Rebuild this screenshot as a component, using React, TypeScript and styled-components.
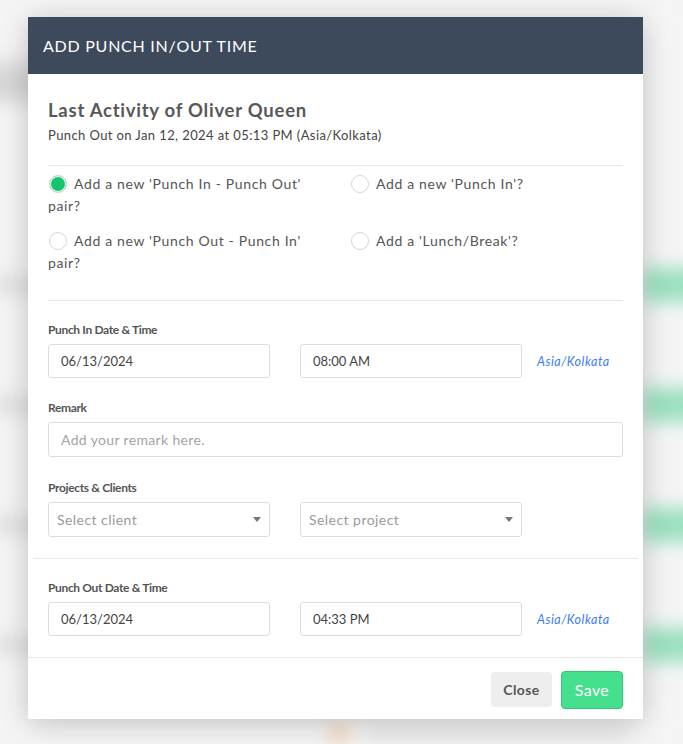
import React from "react";
import styled, { createGlobalStyle } from "styled-components";

const GlobalStyle = createGlobalStyle`
  html, body {
    margin: 0;
    padding: 0;
    background: #f4f4f4;
    font-family: "Lato", "Liberation Sans", sans-serif;
  }
  * { box-sizing: border-box; }
`;

const Screen = styled.div`
  position: relative;
  width: 683px;
  height: 744px;
  overflow: hidden;
`;

// blurred page behind the modal
const Backdrop = styled.div`
  display: flex;
  flex-direction: column;
  width: 683px;
  height: 744px;
  padding-top: 62px;
  background: #f5f5f5;
  filter: blur(9px);
`;

const BgTopBar = styled.div`
  height: 40px;
  margin-left: -20px;
  width: 70px;
  background: #d8d8d8;
`;

const BgRows = styled.div`
  display: flex;
  flex-direction: column;
  margin-top: 123px;
`;

const BgRow = styled.div`
  display: flex;
  align-items: center;
  justify-content: space-between;
  height: 120px;
`;

const BgText = styled.div`
  width: 60px;
  height: 16px;
  margin-left: -10px;
  background: #dedede;
`;

const BgButton = styled.div`
  width: 70px;
  height: 34px;
  margin-right: -30px;
  border-radius: 4px;
  background: #9ae0bf;
`;

const BgFooter = styled.div`
  display: flex;
  align-items: center;
  gap: 18px;
  padding-left: 330px;
  margin-top: 20px;
`;

const BgIcon = styled.div`
  width: 18px;
  height: 18px;
  border-radius: 50%;
  background: #f6c9a4;
`;

const BgLine = styled.div`
  width: 260px;
  height: 10px;
  background: #e2e2e2;
`;

const Modal = styled.div`
  position: absolute;
  left: 28px;
  top: 17px;
  width: 615px;
  height: 702px;
  background: #fff;
  box-shadow: 0 4px 28px rgba(0, 0, 0, 0.22);
  display: flex;
  flex-direction: column;
`;

const Header = styled.div`
  height: 57px;
  background: #3d4a5c;
  color: #fff;
  display: flex;
  align-items: center;
  padding: 0 15px;
  font-size: 16px;
  letter-spacing: 0.75px;
`;

const Body = styled.div`
  flex: 1;
  padding: 25px 20px 0;
  display: flex;
  flex-direction: column;
`;

const Title = styled.div`
  font-size: 18.5px;
  font-weight: 700;
  color: #585858;
  line-height: 22px;
  letter-spacing: 0.75px;
`;

const Subtitle = styled.div`
  font-size: 13px;
  color: #444;
  line-height: 18px;
  margin-top: 5px;
  letter-spacing: 0.4px;
`;

const Divider = styled.div<{ $wide?: boolean; $top: number }>`
  height: 1px;
  background: #e8e8e8;
  margin: ${(p) => p.$top}px ${(p) => (p.$wide ? "-15px" : "0")} 0;
`;

const RadioGrid = styled.div`
  display: grid;
  grid-template-columns: 257px 257px;
  column-gap: 45px;
  row-gap: 13px;
  margin-top: 7px;
`;

const RadioOption = styled.label`
  font-size: 14px;
  line-height: 22px;
  color: #555;
  letter-spacing: 0.65px;
`;

const RadioDot = styled.span<{ $checked?: boolean }>`
  display: inline-block;
  width: 18px;
  height: 18px;
  border-radius: 50%;
  vertical-align: -4px;
  margin: 0 7px 0 1px;
  border: 1px solid #d6d6d6;
  background: ${(p) => (p.$checked ? "#14c46f" : "#fff")};
  box-shadow: ${(p) => (p.$checked ? "inset 0 0 0 1px #fff" : "none")};
`;

const FieldLabel = styled.div<{ $top: number }>`
  font-size: 12px;
  font-weight: 700;
  color: #555;
  line-height: 16px;
  letter-spacing: -0.35px;
  margin-top: ${(p) => p.$top}px;
  margin-bottom: 6px;
`;

const FieldRow = styled.div`
  display: flex;
  align-items: center;
  gap: 30px;
`;

const Input = styled.div<{ $full?: boolean; $placeholder?: boolean }>`
  width: ${(p) => (p.$full ? "575px" : "222px")};
  height: ${(p) => (p.$full ? "35px" : "34px")};
  border: 1px solid #ddd;
  border-radius: 3px;
  display: flex;
  align-items: center;
  padding-left: 12px;
  font-size: ${(p) => (p.$placeholder ? "14px" : "13px")};
  letter-spacing: ${(p) => (p.$placeholder ? "0.35px" : "0")};
  color: ${(p) => (p.$placeholder ? "#a4a4a4" : "#444")};
`;

const Select = styled.div`
  width: 222px;
  height: 35px;
  border: 1px solid #ddd;
  border-radius: 3px;
  display: flex;
  align-items: center;
  justify-content: space-between;
  padding: 0 8px;
  font-size: 14px;
  letter-spacing: 0.45px;
  color: #9a9a9a;
`;

const Caret = styled.span`
  width: 0;
  height: 0;
  border-left: 4px solid transparent;
  border-right: 4px solid transparent;
  border-top: 5px solid #777;
`;

const Zone = styled.span`
  font-size: 12.5px;
  font-style: italic;
  color: #3d7cf3;
  letter-spacing: 0.5px;
  margin-left: -15px;
`;

const Footer = styled.div`
  height: 62px;
  border-top: 1px solid #e8e8e8;
  display: flex;
  align-items: center;
  justify-content: flex-end;
  gap: 9px;
  padding: 2px 20px 0;
`;

const Button = styled.button<{ $primary?: boolean }>`
  border-radius: ${(p) => (p.$primary ? "4px" : "3px")};
  border: 1px solid ${(p) => (p.$primary ? "#2fca78" : "#eee")};
  background: ${(p) => (p.$primary ? "#45e08e" : "#eee")};
  color: ${(p) => (p.$primary ? "#fff" : "#555")};
  font-family: inherit;
  font-size: ${(p) => (p.$primary ? "16px" : "14px")};
  font-weight: ${(p) => (p.$primary ? 400 : 700)};
  letter-spacing: 0.4px;
  height: ${(p) => (p.$primary ? "38px" : "35px")};
  width: ${(p) => (p.$primary ? "62px" : "61px")};
  padding: 0;
  cursor: pointer;
`;

export default function App() {
  return (
    <>
      <GlobalStyle />
      <Screen>
        <Backdrop>
          <BgTopBar />
          <BgRows>
            {[0, 1, 2, 3].map((i) => (
              <BgRow key={i}>
                <BgText />
                <BgButton />
              </BgRow>
            ))}
          </BgRows>
          <BgFooter>
            <BgIcon />
            <BgLine />
          </BgFooter>
        </Backdrop>

        <Modal>
          <Header>ADD PUNCH IN/OUT TIME</Header>
          <Body>
            <Title>Last Activity of Oliver Queen</Title>
            <Subtitle>Punch Out on Jan 12, 2024 at 05:13 PM (Asia/Kolkata)</Subtitle>
            <Divider $top={21} />
            <RadioGrid>
              <RadioOption>
                <RadioDot $checked />
                Add a new 'Punch In - Punch Out' pair?
              </RadioOption>
              <RadioOption>
                <RadioDot />
                Add a new 'Punch In'?
              </RadioOption>
              <RadioOption>
                <RadioDot />
                Add a new 'Punch Out - Punch In' pair?
              </RadioOption>
              <RadioOption>
                <RadioDot />
                Add a 'Lunch/Break'?
              </RadioOption>
            </RadioGrid>
            <Divider $top={26} />

            <FieldLabel $top={21}>Punch In Date &amp; Time</FieldLabel>
            <FieldRow>
              <Input>06/13/2024</Input>
              <Input>08:00 AM</Input>
              <Zone>Asia/Kolkata</Zone>
            </FieldRow>

            <FieldLabel $top={22}>Remark</FieldLabel>
            <Input $full $placeholder>Add your remark here.</Input>

            <FieldLabel $top={23}>Projects &amp; Clients</FieldLabel>
            <FieldRow>
              <Select>
                Select client
                <Caret />
              </Select>
              <Select>
                Select project
                <Caret />
              </Select>
            </FieldRow>
            <Divider $wide $top={21} />

            <FieldLabel $top={21}>Punch Out Date &amp; Time</FieldLabel>
            <FieldRow>
              <Input>06/13/2024</Input>
              <Input>04:33 PM</Input>
              <Zone>Asia/Kolkata</Zone>
            </FieldRow>
          </Body>
          <Footer>
            <Button>Close</Button>
            <Button $primary>Save</Button>
          </Footer>
        </Modal>
      </Screen>
    </>
  );
}
